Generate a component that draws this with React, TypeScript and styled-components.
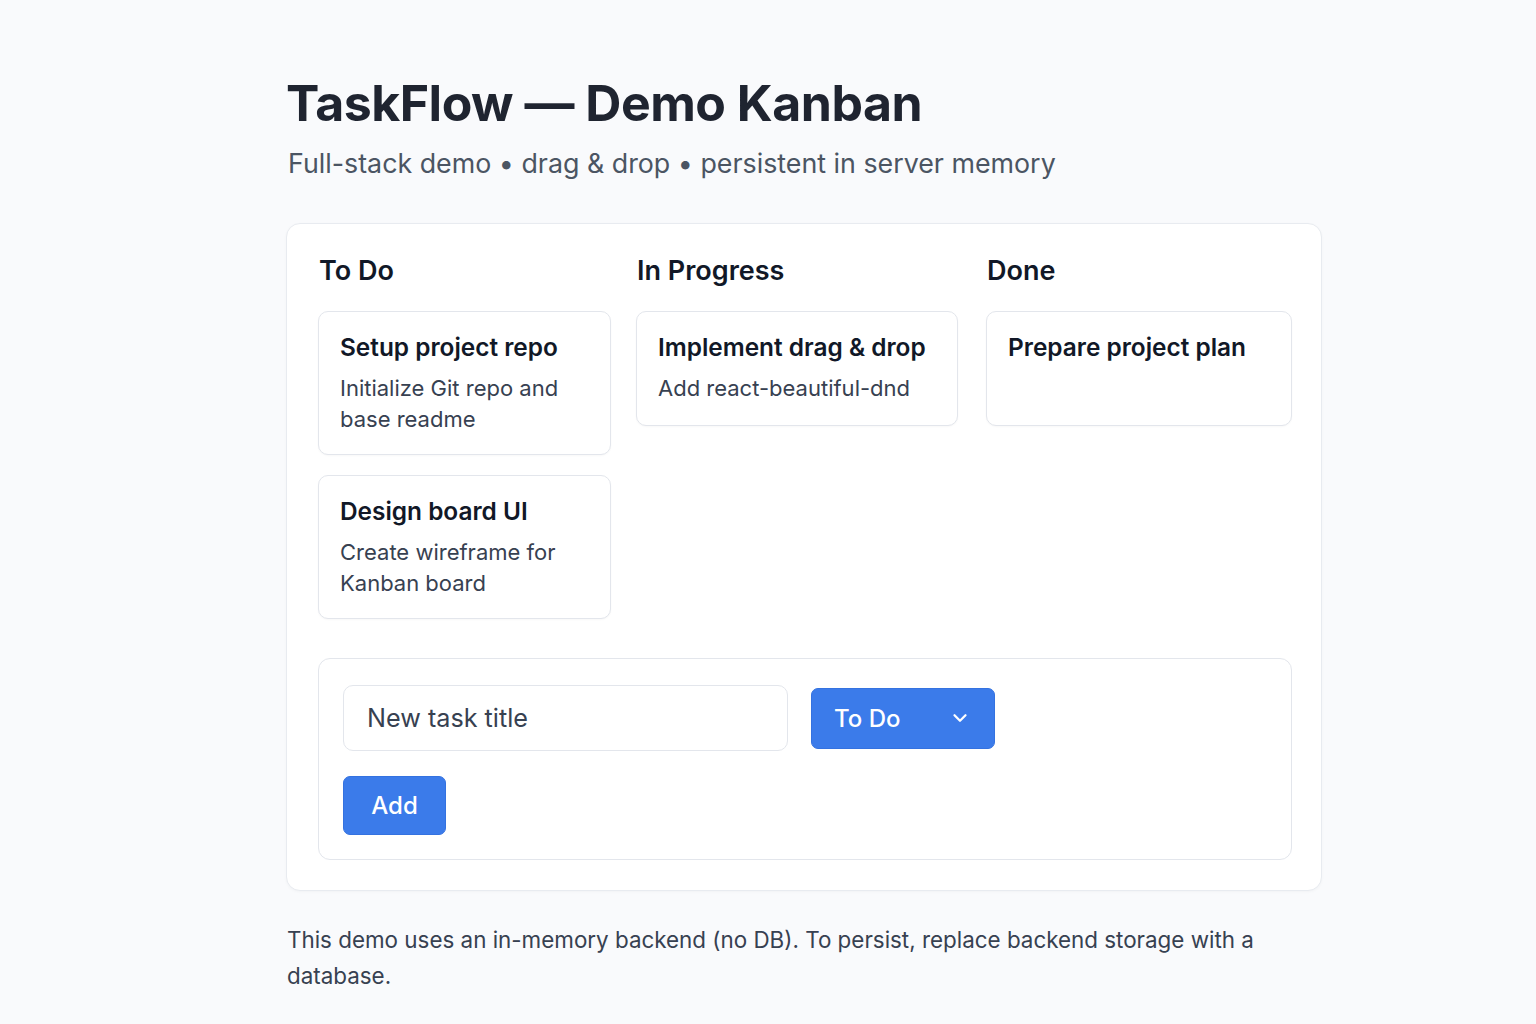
import React from 'react';
import styled, {createGlobalStyle} from "styled-components";
import {ChevronDown} from 'lucide-react';

const GlobalStyle = createGlobalStyle`
  body {
    margin: 0;
    background: #f9fafc;
    font-family: Inter, "Noto Sans", sans-serif;
    color: #111827;
  }
`

type Task = { id: number; title: string; description?: string }
type Column = { id: string; title: string; width: number; tasks: Task[] }

const columns: Column[] = [
    {
        id: 'todo', title: 'To Do', width: 293, tasks: [
            {id: 1, title: 'Setup project repo', description: 'Initialize Git repo and base readme'},
            {id: 2, title: 'Design board UI', description: 'Create wireframe for Kanban board'},
        ]
    },
    {
        id: 'progress', title: 'In Progress', width: 322, tasks: [
            {id: 3, title: 'Implement drag & drop', description: 'Add react-beautiful-dnd'},
        ]
    },
    {
        id: 'done', title: 'Done', width: 306, tasks: [
            {id: 4, title: 'Prepare project plan'},
        ]
    },
]

const App = () => {
    return (
        <>
            <GlobalStyle/>
            <Page>
                <Title>TaskFlow — Demo Kanban</Title>
                <Subtitle>Full-stack demo • drag &amp; drop • persistent in server memory</Subtitle>
                <Board>
                    <Columns>
                        {columns.map(col => (
                            <ColumnWrapper key={col.id} $width={col.width}>
                                <ColumnTitle>{col.title}</ColumnTitle>
                                <CardList>
                                    {col.tasks.map(task => (
                                        <Card key={task.id}>
                                            <CardTitle>{task.title}</CardTitle>
                                            {task.description && <CardText>{task.description}</CardText>}
                                        </Card>
                                    ))}
                                </CardList>
                            </ColumnWrapper>
                        ))}
                    </Columns>
                    <AddForm onSubmit={e => e.preventDefault()}>
                        <FormRow>
                            <TitleInput placeholder="New task title"/>
                            <SelectButton type="button">
                                <span>To Do</span>
                                <ChevronDown size={22} strokeWidth={2.5}/>
                            </SelectButton>
                        </FormRow>
                        <AddButton type="submit">Add</AddButton>
                    </AddForm>
                </Board>
                <Note>This demo uses an in-memory backend (no DB). To persist, replace backend storage with a database.</Note>
            </Page>
        </>
    );
};

export default App;

const Page = styled.main`
  width: 1036px;
  margin-left: 286px;
  padding: 73px 0 40px;
`
const Title = styled.h1`
  margin: 0;
  font-size: 50px;
  line-height: 60px;
  font-weight: 700;
  letter-spacing: -0.5px;
  color: #1f2430;
`
const Subtitle = styled.p`
  margin: 12px 0 0 2px;
  font-size: 26.8px;
  line-height: 36px;
  color: #4b5563;
`
const Board = styled.section`
  margin-top: 42px;
  background: #fff;
  border: 1px solid #e8ebf0;
  border-radius: 14px;
  padding: 31px 29px 30px 31px;
  box-shadow: 0 1px 3px rgba(16, 24, 40, 0.03);
`
const Columns = styled.div`
  display: flex;
  gap: 25px;
  width: 974px;
`
const ColumnWrapper = styled.div<{ $width: number }>`
  display: flex;
  flex-direction: column;
  width: ${p => p.$width}px;
  flex-shrink: 0;

  &:last-child {
    margin-left: 3px;
  }
`
const ColumnTitle = styled.h2`
  margin: 0 0 24px 1px;
  font-size: 27px;
  line-height: 32px;
  font-weight: 600;
  color: #111827;
`
const CardList = styled.div`
  display: flex;
  flex-direction: column;
  gap: 20px;
`
const Card = styled.div`
  min-height: 115px;
  box-sizing: border-box;
  background: #fff;
  border: 1px solid #e3e6ec;
  border-radius: 10px;
  padding: 20px 21px 19px;
  box-shadow: 0 1px 2px rgba(16, 24, 40, 0.03);
`
const CardTitle = styled.h3`
  margin: 0;
  font-size: 24.4px;
  line-height: 30px;
  font-weight: 600;
  color: #111827;
`
const CardText = styled.p`
  margin: 11px 0 0;
  font-size: 22px;
  line-height: 31px;
  color: #374151;
`
const AddForm = styled.form`
  margin-top: 39px;
  width: 974px;
  box-sizing: border-box;
  border: 1px solid #e3e6ec;
  border-radius: 12px;
  padding: 26px 24px 24px;
  display: flex;
  flex-direction: column;
  align-items: flex-start;
  gap: 25px;
`
const FormRow = styled.div`
  display: flex;
  align-items: center;
  gap: 23px;
`
const TitleInput = styled.input`
  width: 445px;
  height: 66px;
  box-sizing: border-box;
  border: 1px solid #e3e6ec;
  border-radius: 10px;
  padding: 0 23px;
  font-family: Inter, sans-serif;
  font-size: 25.2px;
  color: #111827;
  outline: none;

  &::placeholder {
    color: #374151;
  }
`
const BlueButton = styled.button`
  background: #3b7bea;
  color: #fff;
  border: 1px solid #3472e0;
  border-radius: 7px;
  font-family: Inter, sans-serif;
  font-size: 24px;
  font-weight: 500;
  cursor: pointer;
`
const SelectButton = styled(BlueButton)`
  width: 184px;
  height: 61px;
  display: flex;
  align-items: center;
  justify-content: space-between;
  padding: 0 23px 0 22px;
`
const AddButton = styled(BlueButton)`
  width: 103px;
  height: 59px;
  padding: 0;
`
const Note = styled.p`
  margin: 31px 0 0 1px;
  font-size: 22.4px;
  line-height: 36px;
  color: #374151;
`
